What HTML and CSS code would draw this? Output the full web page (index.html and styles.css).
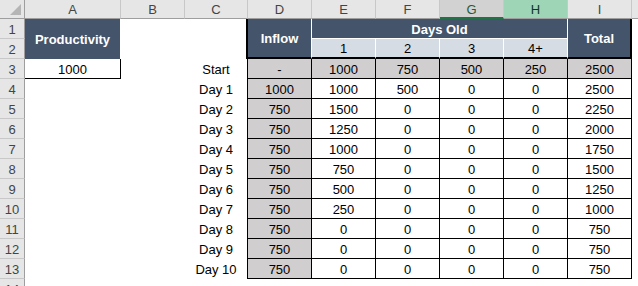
FILE: index.html
```html
<!DOCTYPE html>
<html>
<head>
<meta charset="utf-8">
<link rel="stylesheet" href="styles.css">
</head>
<body>
<div class="sheet">
  <!-- column header row -->
  <div class="corner"><span class="tri"></span></div>
  <div class="h">A</div>
  <div class="h">B</div>
  <div class="h">C</div>
  <div class="h">D</div>
  <div class="h">E</div>
  <div class="h">F</div>
  <div class="h hg">G</div>
  <div class="h hh">H</div>
  <div class="h">I</div>
  <div class="h hj"></div>

  <!-- row 1 -->
  <div class="r">1</div>
  <div class="c dk span2r brw b">Productivity</div>
  <div class="c"></div>
  <div class="c span2r bthick"></div>
  <div class="c dk span2r brw bbk b">Inflow</div>
  <div class="c dk span4c brw bbw b">Days Old</div>
  <div class="c dk span2r brk2 bbk b">Total</div>
  <div class="c"></div>

  <!-- row 2 -->
  <div class="r">2</div>
  <div class="c"></div>
  <div class="c lt brw bbk">1</div>
  <div class="c lt brw bbk">2</div>
  <div class="c lt brw bbk">3</div>
  <div class="c lt brw bbk">4+</div>
  <div class="c"></div>

  <!-- row 3 -->
  <div class="r">3</div>
  <div class="c a3">1000</div>
  <div class="c"></div>
  <div class="c lab">Start</div>
  <div class="c d g">-</div>
  <div class="c d g">1000</div>
  <div class="c d g">750</div>
  <div class="c d g">500</div>
  <div class="c d g">250</div>
  <div class="c d g">2500</div>
  <div class="c"></div>

  <!-- row 4 -->
  <div class="r">4</div>
  <div class="c"></div><div class="c"></div>
  <div class="c lab">Day 1</div>
  <div class="c d g">1000</div>
  <div class="c d">1000</div><div class="c d">500</div><div class="c d">0</div><div class="c d">0</div><div class="c d">2500</div>
  <div class="c"></div>

  <!-- row 5 -->
  <div class="r">5</div>
  <div class="c"></div><div class="c"></div>
  <div class="c lab">Day 2</div>
  <div class="c d g">750</div>
  <div class="c d">1500</div><div class="c d">0</div><div class="c d">0</div><div class="c d">0</div><div class="c d">2250</div>
  <div class="c"></div>

  <!-- row 6 -->
  <div class="r">6</div>
  <div class="c"></div><div class="c"></div>
  <div class="c lab">Day 3</div>
  <div class="c d g">750</div>
  <div class="c d">1250</div><div class="c d">0</div><div class="c d">0</div><div class="c d">0</div><div class="c d">2000</div>
  <div class="c"></div>

  <!-- row 7 -->
  <div class="r">7</div>
  <div class="c"></div><div class="c"></div>
  <div class="c lab">Day 4</div>
  <div class="c d g">750</div>
  <div class="c d">1000</div><div class="c d">0</div><div class="c d">0</div><div class="c d">0</div><div class="c d">1750</div>
  <div class="c"></div>

  <!-- row 8 -->
  <div class="r">8</div>
  <div class="c"></div><div class="c"></div>
  <div class="c lab">Day 5</div>
  <div class="c d g">750</div>
  <div class="c d">750</div><div class="c d">0</div><div class="c d">0</div><div class="c d">0</div><div class="c d">1500</div>
  <div class="c"></div>

  <!-- row 9 -->
  <div class="r">9</div>
  <div class="c"></div><div class="c"></div>
  <div class="c lab">Day 6</div>
  <div class="c d g">750</div>
  <div class="c d">500</div><div class="c d">0</div><div class="c d">0</div><div class="c d">0</div><div class="c d">1250</div>
  <div class="c"></div>

  <!-- row 10 -->
  <div class="r">10</div>
  <div class="c"></div><div class="c"></div>
  <div class="c lab">Day 7</div>
  <div class="c d g">750</div>
  <div class="c d">250</div><div class="c d">0</div><div class="c d">0</div><div class="c d">0</div><div class="c d">1000</div>
  <div class="c"></div>

  <!-- row 11 -->
  <div class="r">11</div>
  <div class="c"></div><div class="c"></div>
  <div class="c lab">Day 8</div>
  <div class="c d g">750</div>
  <div class="c d">0</div><div class="c d">0</div><div class="c d">0</div><div class="c d">0</div><div class="c d">750</div>
  <div class="c"></div>

  <!-- row 12 -->
  <div class="r">12</div>
  <div class="c"></div><div class="c"></div>
  <div class="c lab">Day 9</div>
  <div class="c d g">750</div>
  <div class="c d">0</div><div class="c d">0</div><div class="c d">0</div><div class="c d">0</div><div class="c d">750</div>
  <div class="c"></div>

  <!-- row 13 -->
  <div class="r">13</div>
  <div class="c"></div><div class="c"></div>
  <div class="c lab">Day 10</div>
  <div class="c d g">750</div>
  <div class="c d">0</div><div class="c d">0</div><div class="c d">0</div><div class="c d">0</div><div class="c d">750</div>
  <div class="c"></div>

  <!-- row 14 (partial) -->
  <div class="r r14">14</div>
</div>
</body>
</html>
```

FILE: styles.css
```css
html, body {
  margin: 0;
  padding: 0;
  background: #ffffff;
}

.sheet {
  width: 638px;
  height: 286px;
  overflow: hidden;
  display: grid;
  grid-template-columns: 25px 96px 64px 63px 64px 64px 64px 64px 64px 64px 1fr;
  grid-template-rows: 19px repeat(13, 20px) 20px;
  font-family: "Liberation Sans", Arial, sans-serif;
  font-size: 13px;
  color: #000;
}

.sheet > div {
  box-sizing: border-box;
  display: flex;
  align-items: center;
  justify-content: center;
  white-space: nowrap;
  overflow: hidden;
}

/* headers */
.corner {
  position: relative;
  background: #e6e6e6;
  border-right: 1px solid #9e9e9e;
  border-bottom: 1px solid #9e9e9e;
}
.tri {
  position: absolute;
  right: 3px;
  bottom: 3px;
  width: 0;
  height: 0;
  border-left: 11px solid transparent;
  border-bottom: 11px solid #b5b5b5;
}

.h {
  background: #e6e6e6;
  color: #444444;
  border-right: 1px solid #c8c8c8;
  border-bottom: 1px solid #9e9e9e;
  padding-top: 1px;
}
.hg {
  background: #d2d2d2;
  color: #1f5c3a;
  border-bottom: 2px solid #217346;
}
.hh {
  background: #9fd5b7;
  color: #0c3a20;
  border-right-color: #c8c8c8;
}
.hj {
  border-right: none;
}

.r {
  background: #e6e6e6;
  color: #444444;
  border-right: 1px solid #9e9e9e;
  border-bottom: 1px solid #c8c8c8;
  padding-top: 1px;
}
.r14 {
  align-items: flex-start !important;
  padding-top: 3px;
}

/* cells */
.c {
  padding-top: 1px;
}

.dk {
  background: #44546a;
  color: #ffffff;
}
.b {
  font-weight: bold;
}
.lt {
  background: #d6dce4;
}
.g {
  background: #d0cece;
}

.span2r { grid-row: span 2; }
.span4c { grid-column: span 4; }

.brw { border-right: 1px solid #ffffff; }
.bbw { border-bottom: 1px solid #ffffff; }
.bbk { border-bottom: 2px solid #000000; }
.brk2 { border-right: 2px solid #000000; }
.bthick { border-right: 2px solid #000000; }

.a3 {
  border-right: 1px solid #000000;
  border-bottom: 1px solid #000000;
}

.lab {
  border-right: 1px solid #000000;
}

.d {
  border-right: 1px solid #000000;
  border-bottom: 1px solid #000000;
}
```
